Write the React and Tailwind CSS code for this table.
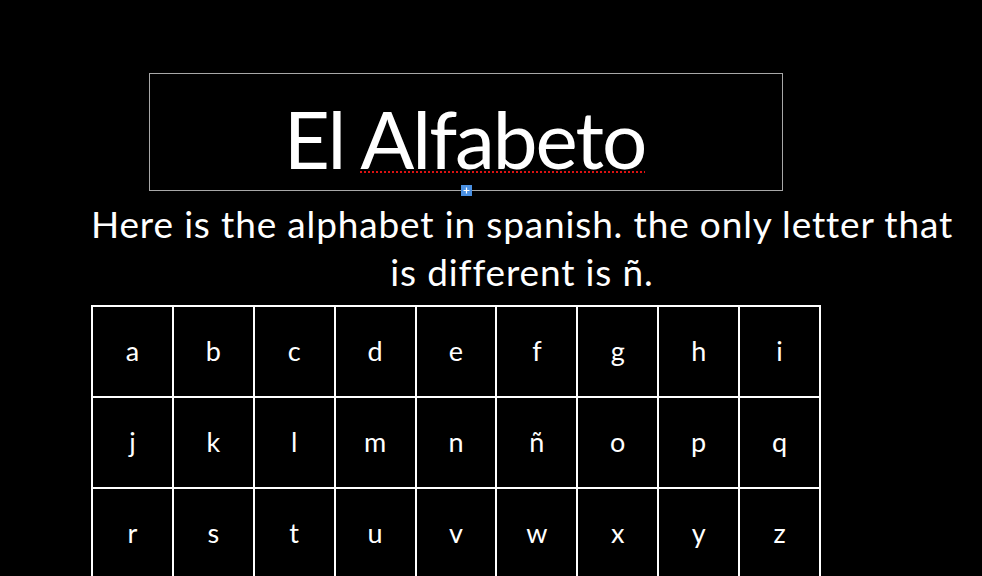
import React from 'react';

const rows = [
  ['a', 'b', 'c', 'd', 'e', 'f', 'g', 'h', 'i'],
  ['j', 'k', 'l', 'm', 'n', 'ñ', 'o', 'p', 'q'],
  ['r', 's', 't', 'u', 'v', 'w', 'x', 'y', 'z'],
];

export default function App() {
  return (
    <div className="w-[982px] h-[576px] overflow-hidden bg-black text-white font-['Lato',sans-serif]">
      <div className="pt-[73px] pl-[149px]">
        <div className="relative w-[634px] h-[118px] border border-[#a8a8a8] flex items-center justify-center">
          <h1 className="text-[80px] leading-none font-normal tracking-[-2px] mt-[12px] mr-[3px]">
            El{' '}
            <span className="underline decoration-dotted decoration-[#d11] decoration-2 underline-offset-[2px]">
              Alfabeto
            </span>
          </h1>
          {/* resize handle */}
          <svg className="absolute left-[311px] -bottom-[6px]" width="11" height="11" viewBox="0 0 11 11">
            <rect width="11" height="11" fill="#4a90e2" />
            <path d="M5.5 2.5v6M2.5 5.5h6" stroke="#fff" strokeWidth="1.2" />
          </svg>
        </div>
      </div>

      <p className="w-[900px] ml-[72px] mt-[9px] text-center text-[37px] tracking-[0.85px] leading-[48px]">
        Here is the alphabet in spanish. the only letter that
        <br />
        is different is ñ.
      </p>

      <div className="ml-[91px] mt-[9px] w-[730px] border-t-2 border-l-2 border-white">
        {rows.map((row, i) => (
          <div key={i} className="grid grid-cols-9">
            {row.map((ch) => (
              <div
                key={ch}
                className="h-[91px] border-r-2 border-b-2 border-white flex items-center justify-center text-[27px]"
              >
                {ch}
              </div>
            ))}
          </div>
        ))}
      </div>
    </div>
  );
}
